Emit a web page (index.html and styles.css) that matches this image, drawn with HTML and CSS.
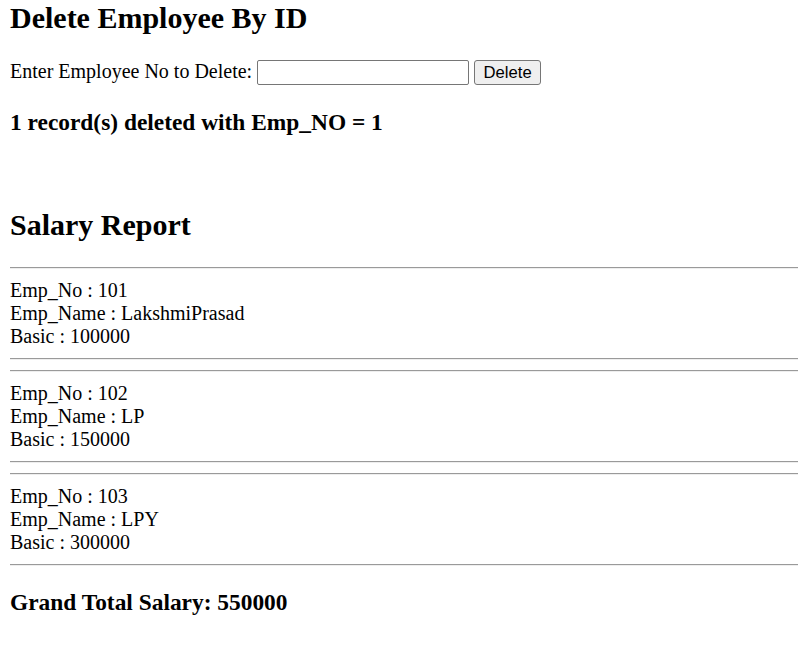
FILE: index.html
```html
<!DOCTYPE html>
<html>
<head>
<meta charset="utf-8">
<title>Delete Employee</title>
<link rel="stylesheet" href="styles.css">
</head>
<body>
<h2 class="title first">Delete Employee By ID</h2>
<form class="del-form">
  <label class="del-label" for="empno">Enter Employee No to Delete:</label>
  <input class="del-input" id="empno" type="text">
  <button class="del-btn" type="button">Delete</button>
</form>
<h3 class="msg">1 record(s) deleted with Emp_NO = 1</h3>
<div class="spacer"></div>
<h2 class="title">Salary Report</h2>
<hr class="rule">
<div class="record">
  <div class="line">Emp_No : 101</div>
  <div class="line">Emp_Name : LakshmiPrasad</div>
  <div class="line">Basic : 100000</div>
</div>
<hr class="rule">
<hr class="rule">
<div class="record">
  <div class="line">Emp_No : 102</div>
  <div class="line">Emp_Name : LP</div>
  <div class="line">Basic : 150000</div>
</div>
<hr class="rule">
<hr class="rule">
<div class="record">
  <div class="line">Emp_No : 103</div>
  <div class="line">Emp_Name : LPY</div>
  <div class="line">Basic : 300000</div>
</div>
<hr class="rule">
<h3 class="msg total">Grand Total Salary: 550000</h3>
</body>
</html>
```

FILE: styles.css
```css
html, body {
  margin: 0;
  background: #ffffff;
}
body {
  padding: 0 0 0 10px;
  font-family: "Liberation Serif", "Times New Roman", serif;
  font-size: 20px;
  line-height: 23px;
  color: #000000;
}
.title {
  font-size: 30px;
  line-height: 34.5px;
  font-weight: bold;
  margin: 24.9px 0;
}
.title.first {
  margin-top: 0.8px;
}
.del-form {
  display: flex;
  align-items: flex-start;
  margin: 0;
  height: 25px;
}
.del-label {
  line-height: 23px;
  margin-top: -0.5px;
}
.del-input {
  box-sizing: border-box;
  width: 212px;
  height: 25px;
  margin: 0 0 0 5px;
  padding: 1px 3px;
  border: 1px solid #767676;
  border-radius: 2px;
  background: #ffffff;
  font-family: "Liberation Sans", Arial, sans-serif;
  font-size: 16.67px;
}
.del-btn {
  box-sizing: border-box;
  width: 67px;
  height: 25px;
  margin: 0 0 0 5px;
  padding: 0;
  border: 1px solid #767676;
  border-radius: 3px;
  background: #efefef;
  color: #000000;
  font-family: "Liberation Sans", Arial, sans-serif;
  font-size: 16.67px;
  line-height: 21px;
}
.msg {
  font-size: 23.4px;
  line-height: 26.9px;
  font-weight: bold;
  margin: 23.4px 0;
}
.msg.total {
  margin-top: 22.4px;
}
.spacer {
  height: 24px;
}
.rule {
  height: 0;
  margin: 10px 0;
  border: 0;
  border-top: 1px solid #9a9a9a;
  border-bottom: 1px solid #eeeeee;
}
.line {
  height: 23px;
}
```
